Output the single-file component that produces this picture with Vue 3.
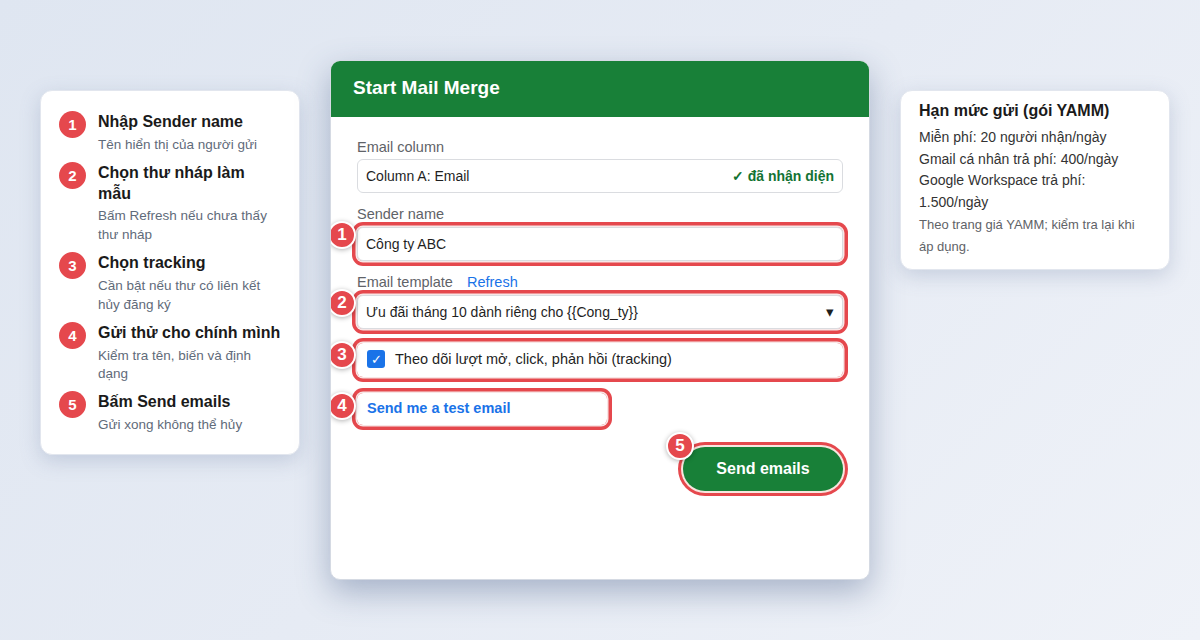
<script setup>
const steps = [
  { n: 1, title: 'Nhập Sender name', sub: 'Tên hiển thị của người gửi' },
  { n: 2, title: 'Chọn thư nháp làm mẫu', sub: 'Bấm Refresh nếu chưa thấy thư nháp' },
  { n: 3, title: 'Chọn tracking', sub: 'Cần bật nếu thư có liên kết hủy đăng ký' },
  { n: 4, title: 'Gửi thử cho chính mình', sub: 'Kiểm tra tên, biến và định dạng' },
  { n: 5, title: 'Bấm Send emails', sub: 'Gửi xong không thể hủy' },
]
const templateName = 'Ưu đãi tháng 10 dành riêng cho {' + '{Cong_ty}' + '}'
</script>

<template>
  <div class="page">
    <aside class="card steps">
      <div v-for="s in steps" :key="s.n" class="step">
        <span class="num">{{ s.n }}</span>
        <div class="step-text">
          <div class="step-title">{{ s.title }}</div>
          <div class="step-sub">{{ s.sub }}</div>
        </div>
      </div>
    </aside>

    <main class="dialog">
      <header class="dialog-head">Start Mail Merge</header>
      <div class="dialog-body">
        <label class="label">Email column</label>
        <div class="field">
          <span>Column A: Email</span>
          <span class="detected">✓ đã nhận diện</span>
        </div>

        <label class="label gap-top">Sender name</label>
        <div class="field ring">
          <span>Công ty ABC</span>
          <span class="badge">1</span>
        </div>

        <label class="label gap-top">Email template <a class="refresh">Refresh</a></label>
        <div class="field ring">
          <span>{{ templateName }}</span>
          <span class="caret">▾</span>
          <span class="badge">2</span>
        </div>

        <div class="check ring">
          <span class="box">✓</span>
          <span>Theo dõi lượt mở, click, phản hồi (tracking)</span>
          <span class="badge b3">3</span>
        </div>

        <div class="test ring">
          <span>Send me a test email</span>
          <span class="badge b4">4</span>
        </div>

        <div class="actions">
          <button class="send ring">
            Send emails
            <span class="badge">5</span>
          </button>
        </div>
      </div>
    </main>

    <aside class="card quota">
      <div class="quota-title">Hạn mức gửi (gói YAMM)</div>
      <div class="quota-line">Miễn phí: 20 người nhận/ngày</div>
      <div class="quota-line">Gmail cá nhân trả phí: 400/ngày</div>
      <div class="quota-line">Google Workspace trả phí: 1.500/ngày</div>
      <div class="quota-note">Theo trang giá YAMM; kiểm tra lại khi áp dụng.</div>
    </aside>
  </div>
</template>

<style>
html, body { margin: 0; }
</style>

<style scoped>
.page {
  box-sizing: border-box;
  width: 1200px;
  height: 640px;
  padding: 60px 30px 60px 40px;
  display: flex;
  align-items: flex-start;
  gap: 30px;
  background: linear-gradient(135deg, #dfe6f1 0%, #e6ebf4 50%, #eff2f8 100%);
  font-family: "Liberation Sans", Arial, sans-serif;
  color: #1f1f1f;
}
.card {
  box-sizing: border-box;
  margin-top: 30px;
  background: #fff;
  border: 1px solid #e2e6ee;
  border-radius: 12px;
  box-shadow: 0 6px 20px rgba(100, 120, 160, 0.26);
}
.steps {
  width: 260px;
  padding: 20px 18px 19px;
  display: flex;
  flex-direction: column;
  gap: 7px;
}
.step { display: flex; gap: 12px; }
.num {
  flex: none;
  width: 27px;
  height: 27px;
  border-radius: 50%;
  background: #e5484d;
  color: #fff;
  font-size: 15px;
  font-weight: 700;
  display: flex;
  align-items: center;
  justify-content: center;
}
.step-title {
  padding-top: 1px;
  font-size: 16px;
  line-height: 20.8px;
  font-weight: 700;
  color: #1a1a1a;
}
.step-sub {
  font-size: 13.5px;
  line-height: 18.9px;
  margin-top: 3px;
  color: #5f6b7a;
}
.dialog {
  box-sizing: border-box;
  width: 540px;
  height: 520px;
  flex: none;
  background: #fff;
  border: 1px solid #d5dae3;
  border-radius: 10px;
  overflow: hidden;
  box-shadow: 0 12px 32px rgba(60, 85, 130, 0.38);
}
.dialog-head {
  height: 56px;
  padding: 0 22px 2px;
  box-sizing: border-box;
  display: flex;
  align-items: center;
  background: #188038;
  color: #fff;
  font-size: 19px;
  font-weight: 700;
}
.dialog-body {
  padding: 20px 26px;
  display: flex;
  flex-direction: column;
}
.label {
  display: block;
  height: 18px;
  line-height: 20px;
  margin-bottom: 4px;
  font-size: 14.5px;
  color: #5f6368;
}
.gap-top { margin-top: 11px; margin-bottom: 5px; }
.refresh { margin-left: 10px; color: #1a73e8; }
.field {
  box-sizing: border-box;
  position: relative;
  height: 34px;
  padding: 0 8px;
  display: flex;
  align-items: center;
  justify-content: space-between;
  border: 1px solid #dadce0;
  border-radius: 6px;
  font-size: 14px;
}
.detected { color: #137333; font-weight: 700; }
.caret { font-size: 15px; color: #1f1f1f; }
.ring {
  box-shadow: 0 0 0 1.5px #f8e6e6, 0 0 0 5px #e5484d;
}
.check {
  box-sizing: border-box;
  position: relative;
  height: 34px;
  margin-top: 14px;
  padding: 0 10px 2px;
  display: flex;
  align-items: center;
  gap: 10px;
  border-radius: 6px;
  font-size: 14.5px;
}
.box {
  width: 18px;
  height: 18px;
  border-radius: 3px;
  background: #1a73e8;
  color: #fff;
  font-size: 13px;
  display: flex;
  align-items: center;
  justify-content: center;
}
.test {
  box-sizing: border-box;
  position: relative;
  width: 250px;
  height: 32px;
  margin-top: 16px;
  padding: 0 10px 2px;
  display: flex;
  align-items: center;
  border-radius: 6px;
  color: #1a73e8;
  font-size: 14.5px;
  font-weight: 700;
}
.actions {
  margin-top: 22px;
  display: flex;
  justify-content: flex-end;
}
.send {
  position: relative;
  width: 160px;
  height: 44px;
  padding: 0;
  border: 0;
  border-radius: 22px;
  background: #188038;
  color: #fff;
  font-family: inherit;
  font-size: 16px;
  font-weight: 700;
}
.send.ring {
  box-shadow: 0 0 0 2px #f8e6e0, 0 0 0 5px #e5484d;
}
.badge {
  box-sizing: border-box;
  position: absolute;
  left: -30px;
  top: -7px;
  width: 28px;
  height: 28px;
  border-radius: 50%;
  border: 2px solid #fff;
  background: #e5484d;
  color: #fff;
  font-size: 17px;
  font-weight: 700;
  display: flex;
  align-items: center;
  justify-content: center;
  box-shadow: 0 1px 5px rgba(0, 0, 0, 0.3);
}
.badge.b3 { left: -29px; top: -2px; }
.badge.b4 { left: -29px; top: -1px; }
.send .badge { left: -17px; top: -15px; }
.quota {
  width: 270px;
  padding: 9px 18px 12px;
}
.quota-title {
  font-size: 16px;
  line-height: 22px;
  font-weight: 700;
  color: #1a1a1a;
  margin-bottom: 5px;
}
.quota-line { font-size: 14px; line-height: 21.7px; color: #333; }
.quota-note { font-size: 13px; line-height: 21.7px; color: #5f6368; }
</style>
